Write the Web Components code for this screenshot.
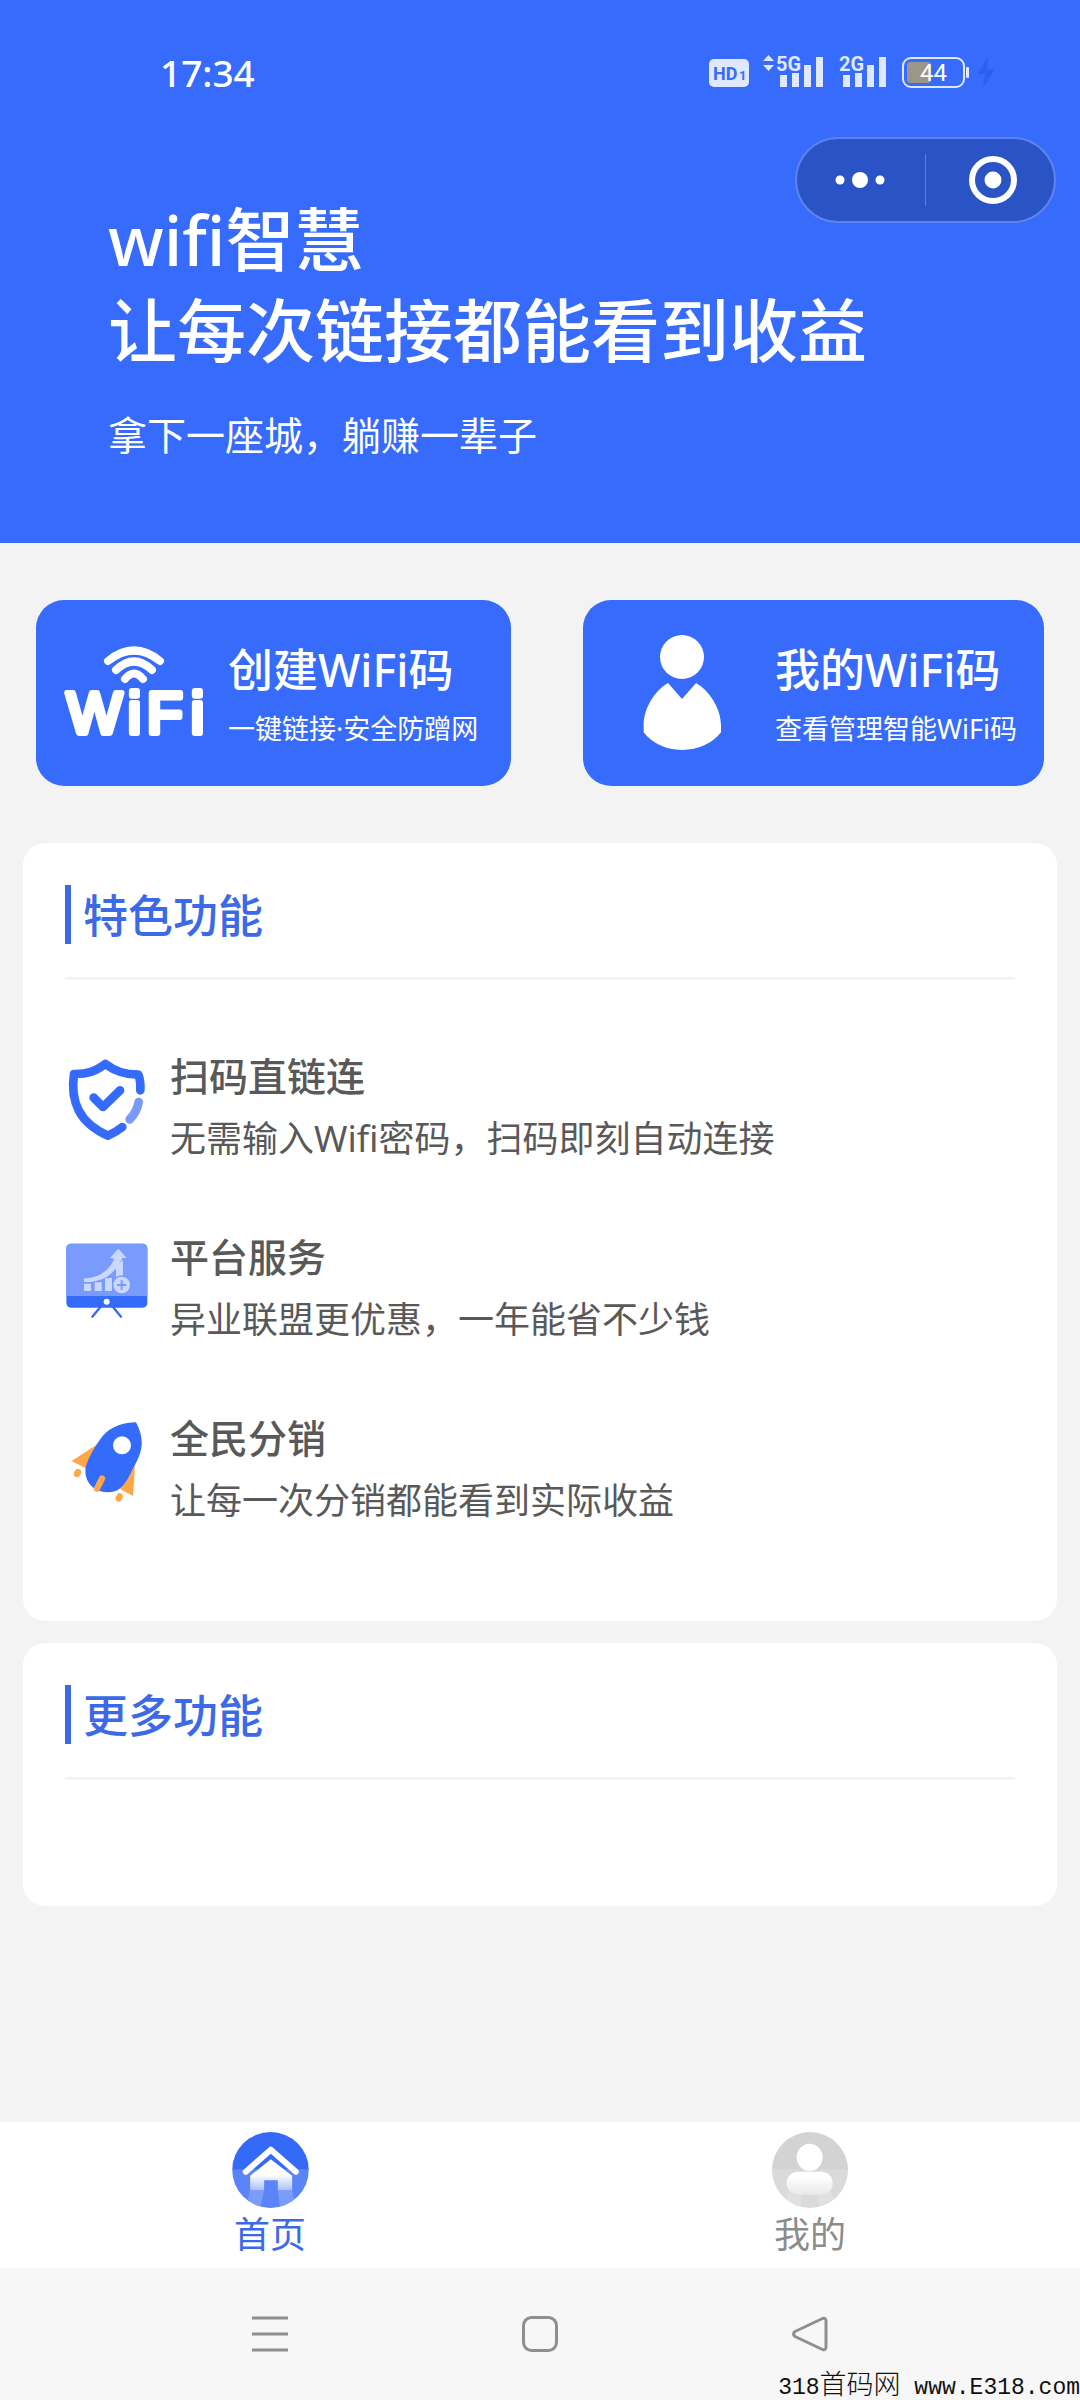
<!DOCTYPE html>
<html lang="zh-CN">
<head>
<meta charset="utf-8">
<meta name="viewport" content="width=device-width, initial-scale=1">
<title>wifi智慧</title>
<style>
  body { margin: 0; background: #f3f3f3; font-family: "Noto Sans", "Noto Sans CJK SC", sans-serif; }
</style>
</head>
<body>
<wifi-app></wifi-app>

<template id="t-app">
  <style>
    :host { display: flex; flex-direction: column; min-height: 100vh; }
    main { flex: 1; display: flex; flex-direction: column; }
    .actions { display: flex; gap: 72px; padding: 57px 36px; }
    .create { flex: 475 1 0; }
    .mine { flex: 461 1 0; }
    .panels { display: flex; flex-direction: column; gap: 22px; padding: 0 23px 40px; }
    .features { display: flex; flex-direction: column; gap: 55px; padding: 65px 0 80px; }
    .empty { height: 118px; }
  </style>
  <hero-header>
    <span slot="title">wifi智慧<br>让每次链接都能看到收益</span>
    <span slot="subtitle">拿下一座城，躺赚一辈子</span>
  </hero-header>
  <main>
    <section class="actions">
      <action-card class="create">
        <svg slot="icon" width="138" height="108" viewBox="66 640 138 108" overflow="visible" fill="none" stroke="#fff" stroke-linecap="round" stroke-linejoin="round">
          <g stroke-width="8">
            <path d="M108 662Q134 641 160 662"/>
            <path d="M116 671Q134 654 152 671"/>
            <path d="M125 680Q134 669 143 680"/>
          </g>
          <text x="67 128 147 191" y="734" fill="#fff" stroke-width="6" font-family="Liberation Sans, sans-serif" font-size="58">WiFi</text>
        </svg>
        <span slot="title">创建WiFi码</span>
        <span slot="note">一键链接·安全防蹭网</span>
      </action-card>
      <action-card class="mine">
        <svg slot="icon" width="138" height="120" viewBox="157 159 414 360" fill="#fff">
          <circle cx="364" cy="231" r="66"/>
          <path d="M322 309L364 357L406 309C450 334 481 390 481 435V457C455 490 412 510 364 510S275 490 249 457V435C249 390 278 334 322 309Z"/>
        </svg>
        <span slot="title">我的WiFi码</span>
        <span slot="note">查看管理智能WiFi码</span>
      </action-card>
    </section>
    <div class="panels">
      <info-panel>
        <span slot="title">特色功能</span>
        <div class="features">
          <feature-item>
            <svg slot="icon" viewBox="135 651 252 252" fill="none" stroke="#356bfa" stroke-width="26" stroke-linecap="round" stroke-linejoin="round">
              <path d="M361 748C362 730 360 714 355 701C313 701 286 691 256 669C226 691 202 700 162 699C156 740 160 778 177 810C194 842 222 865 263 884C280 877 294 869 307 858"/>
              <path stroke="#789bfb" d="M356 783C353 802 342 822 329 835"/>
              <path d="M221 770L249 798L300 748"/>
            </svg>
            <span slot="title">扫码直链连</span>
            <span slot="note">无需输入Wifi密码，扫码即刻自动连接</span>
          </feature-item>
          <feature-item>
            <svg slot="icon" viewBox="75 114 252 252">
              <path d="M181 318L157 347M219 318L243 347" stroke="#356bfa" stroke-width="7" stroke-linecap="round"/>
              <rect x="79" y="128" width="243" height="192" rx="14" fill="#356bfa"/>
              <path d="M93 128H308Q322 128 322 142V285H79V142Q79 128 93 128Z" fill="#789bfd"/>
              <circle cx="200" cy="302" r="9" fill="#fff"/>
              <g fill="#cad8fd">
                <path d="M132 248H153V270H132ZM164 244H185V270H164ZM195 231H216V270H195ZM228 195L249 178V232H228Z"/>
                <path d="M132 232C176 231 206 211 223 173L210 171L235 143L260 171L247 172C225 220 185 246 132 243Z"/>
                <circle cx="245" cy="252" r="27" stroke="#789bfd" stroke-width="4"/>
              </g>
              <path d="M231 252H259M245 238V266" stroke="#789bfd" stroke-width="6"/>
            </svg>
            <span slot="title">平台服务</span>
            <span slot="note">异业联盟更优惠，一年能省不少钱</span>
          </feature-item>
          <feature-item>
            <svg slot="icon" viewBox="75 657 252 252">
              <path d="M170 731L95 780L137 802ZM285 794L240 864L279 885Z" fill="#fda64a"/>
              <path d="M288 664C254 665 212 674 185 709C163 739 135 786 136 812C138 850 165 874 207 874C240 873 256 849 272 817C291 780 308 752 305 718C303 695 296 680 288 664Z" fill="#356bfa"/>
              <circle cx="246" cy="733" r="27" fill="#fff"/>
              <path d="M186 833L171 863M114 813L111 819M239 886L236 892" stroke="#fda64a" stroke-width="19" stroke-linecap="round"/>
            </svg>
            <span slot="title">全民分销</span>
            <span slot="note">让每一次分销都能看到实际收益</span>
          </feature-item>
        </div>
      </info-panel>
      <info-panel>
        <span slot="title">更多功能</span>
        <div class="empty"></div>
      </info-panel>
    </div>
  </main>
  <tab-bar></tab-bar>
  <system-nav></system-nav>
</template>

<template id="t-hero">
  <style>
    :host { display: block; position: relative; background: #366bfb; color: #fff; padding-bottom: 80px; }
    .status { display: flex; align-items: center; justify-content: space-between; height: 145px; padding: 0 83px 0 160px; box-sizing: border-box; }
    time { font-size: 37px; line-height: 44px; font-weight: 500; }
    .status svg { display: block; }
    h1 { margin: 49px 108px 0; font-size: 69px; line-height: 91px; font-weight: 500; }
    p { margin: 31px 108px 0; font-size: 39px; line-height: 56px; }
    .capsule { position: absolute; top: 137px; right: 24px; display: flex; align-items: center; width: 261px; height: 86px; box-sizing: border-box; border: 2px solid #5d84ee; border-radius: 43px; background: #2a54c5; }
    .capsule button { flex: 1 1 0; display: grid; place-items: center; height: 100%; box-sizing: border-box; padding: 0; border: 0; background: none; }
    .capsule i { width: 1px; height: 52px; background: #5d80dc; }
  </style>
  <div class="status">
    <time>17:34</time>
    <svg width="288" height="48" viewBox="709 49 288 48" fill="#dfe8fe" font-family="Roboto, sans-serif" font-weight="700" role="img" aria-label="状态">
      <rect x="709" y="59" width="40" height="28" rx="5"/>
      <text x="713" y="80" font-size="18" fill="#366bfb">HD</text>
      <text x="739" y="80" font-size="13" fill="#366bfb">1</text>
      <path d="M763 61L768.500 55L774 61ZM763 65L768.500 71L774 65Z"/>
      <text x="776" y="71" font-size="20">5G</text>
      <path d="M780 75h7v12h-7ZM792 73h7v14h-7ZM804 65h7v22h-7ZM816 57h7v30h-7Z"/>
      <text x="839" y="71" font-size="20">2G</text>
      <path d="M843 75h7v12h-7ZM855 73h7v14h-7ZM867 65h7v22h-7ZM879 57h7v30h-7Z"/>
      <rect x="907" y="62" width="24" height="21" rx="3" fill="#9c9689"/>
      <rect x="903" y="58" width="61" height="29" rx="8" fill="none" stroke="#dfe8fe" stroke-width="2"/>
      <rect x="966" y="67" width="3" height="11" rx="1"/>
      <text x="920" y="81" font-size="24" font-weight="400" fill="#fff">44</text>
      <path d="M988 57L977 74H985L983 88L995 69H987Z" fill="#2c61ef"/>
    </svg>
  </div>
  <h1><slot name="title"></slot></h1>
  <p><slot name="subtitle"></slot></p>
  <div class="capsule">
    <button aria-label="更多"><svg width="52" height="18" viewBox="0 0 52 18" fill="#fff"><circle cx="5" cy="9" r="4.500"/><circle cx="25" cy="9" r="8"/><circle cx="45" cy="9" r="4.500"/></svg></button>
    <i></i>
    <button aria-label="关闭"><svg width="54" height="48" viewBox="-6 0 54 48"><circle cx="24" cy="24" r="21" fill="none" stroke="#fff" stroke-width="6"/><circle cx="24" cy="24" r="8.500" fill="#fff"/></svg></button>
  </div>
</template>

<template id="t-action">
  <style>
    :host { display: block; min-width: 0; }
    button { display: flex; align-items: center; gap: 24px; width: 100%; height: 186px; box-sizing: border-box; padding: 0 0 0 30px; border: 0; border-radius: 28px; background: #366bfb; color: #fff; font-family: inherit; text-align: left; white-space: nowrap; }
    .text { display: flex; flex-direction: column; gap: 8px; padding-top: 4px; }
    .title { font-size: 45px; line-height: 60px; font-weight: 500; }
    .note { font-size: 27px; line-height: 42px; }
    ::slotted(svg) { display: block; flex: none; }
  </style>
  <button>
    <slot name="icon"></slot>
    <span class="text">
      <span class="title"><slot name="title"></slot></span>
      <span class="note"><slot name="note"></slot></span>
    </span>
  </button>
</template>

<template id="t-panel">
  <style>
    :host { display: block; padding: 42px 42px 8px; border-radius: 22px; background: #fff; }
    header { padding-bottom: 33px; border-bottom: 3px solid #f3f3f3; }
    h2 { margin: 0; padding: 2px 0 0 12px; border-left: 6px solid #3c69e7; color: #3c69e7; font-size: 45px; line-height: 57px; font-weight: 500; }
  </style>
  <header><h2><slot name="title"></slot></h2></header>
  <slot></slot>
</template>

<template id="t-feature">
  <style>
    :host { display: flex; align-items: flex-start; gap: 21px; height: 126px; color: #595959; }
    ::slotted(svg) { width: 84px; height: 84px; flex: none; margin-top: 13px; }
    h3 { margin: 0; font-size: 39px; line-height: 62px; font-weight: 500; }
    p { margin: 0; font-size: 36px; line-height: 63px; }
  </style>
  <slot name="icon"></slot>
  <div>
    <h3><slot name="title"></slot></h3>
    <p><slot name="note"></slot></p>
  </div>
</template>

<template id="t-tabs">
  <style>
    :host { display: block; background: #fff; }
    nav { display: flex; padding: 10px 0 8px; }
    a { flex: 1; display: flex; flex-direction: column; align-items: center; gap: 2px; color: #8c8c8c; font-size: 36px; line-height: 50px; text-decoration: none; }
    a[aria-current] { color: #3c69e7; }
    svg { display: block; }
  </style>
  <nav>
    <a href="#home" aria-current="page">
      <svg width="77" height="76" viewBox="156 66 230 228">
        <defs>
          <clipPath id="disc"><ellipse cx="271" cy="180" rx="115" ry="114"/></clipPath>
          <linearGradient id="fade" x1="0" y1="0" x2="0" y2="1"><stop offset=".5" stop-color="#fff"/><stop offset="1" stop-color="#a9bffc"/></linearGradient>
        </defs>
        <g clip-path="url(#disc)">
          <path d="M156 66H386V180H156Z" fill="#3569f7"/>
          <path d="M156 178H386V294H156Z" fill="#5a84f8"/>
          <path d="M210 241H252L240 294H196ZM293 241H336L346 294H300Z" fill="#7b9df9"/>
          <path d="M210 241V197L272 148L336 197V241H293V211H252V241Z" fill="url(#fade)"/>
          <path d="M197 185L272 119L347 185" fill="none" stroke="#fff" stroke-width="18" stroke-linecap="round" stroke-linejoin="round"/>
        </g>
      </svg>
      首页
    </a>
    <a href="#me">
      <svg width="76" height="76" viewBox="215 66 228 228">
        <defs>
          <clipPath id="disc2"><circle cx="329" cy="180" r="114"/></clipPath>
          <linearGradient id="fade2" x1="0" y1="0" x2="0" y2="1"><stop offset=".2" stop-color="#fff"/><stop offset="1" stop-color="#e9e9e9"/></linearGradient>
        </defs>
        <g clip-path="url(#disc2)">
          <path d="M215 66H443V180H215Z" fill="#d3d3d3"/>
          <path d="M215 178H443V294H215Z" fill="#dadada"/>
          <path d="M262 245L250 294H300L304 254ZM352 254L358 294H410L394 245Z" fill="#e0e0e0"/>
          <rect x="259" y="185" width="138" height="69" rx="34" fill="url(#fade2)"/>
          <ellipse cx="328" cy="142" rx="39" ry="41" fill="#fff"/>
        </g>
      </svg>
      我的
    </a>
  </nav>
</template>

<template id="t-sysnav">
  <style>
    :host { display: block; position: relative; background: #f7f7f7; }
    nav { display: flex; height: 132px; padding: 0 12.5%; }
    button { flex: 1; display: grid; place-items: center; padding: 0; border: 0; background: none; }
    small { position: absolute; right: 0; bottom: 0; color: #111; font-family: "Liberation Mono", "Noto Sans CJK SC", monospace; font-size: 23px; line-height: 24px; white-space: pre; }
    b { font-size: 27px; line-height: 20px; font-weight: 300; }
  </style>
  <nav>
    <button aria-label="菜单"><svg width="36" height="36" viewBox="0 0 36 36" stroke="#8f8f8f" stroke-width="3"><path d="M0 2H36M0 18H36M0 34H36"/></svg></button>
    <button aria-label="主屏幕"><svg width="36" height="36" viewBox="0 0 36 36" fill="none" stroke="#8f8f8f" stroke-width="3"><rect x="1.500" y="1.500" width="33" height="33" rx="8"/></svg></button>
    <button aria-label="返回"><svg width="36" height="36" viewBox="0 0 36 36" fill="none" stroke="#8f8f8f" stroke-width="3" stroke-linejoin="round"><path d="M30.500 2.500L3 15.500Q0 18 3 20.500L30.500 33.500Q34 34.500 34 31V5Q34 1.500 30.500 2.500Z"/></svg></button>
  </nav>
  <small>318<b>首码网</b> www.E318.com</small>
</template>

<script>
  const define = (name, templateId) => {
    customElements.define(name, class extends HTMLElement {
      constructor() {
        super();
        this.attachShadow({ mode: "open" })
          .append(document.getElementById(templateId).content.cloneNode(true));
      }
    });
  };
  define("hero-header", "t-hero");
  define("action-card", "t-action");
  define("info-panel", "t-panel");
  define("feature-item", "t-feature");
  define("tab-bar", "t-tabs");
  define("system-nav", "t-sysnav");
  define("wifi-app", "t-app");
</script>
</body>
</html>
